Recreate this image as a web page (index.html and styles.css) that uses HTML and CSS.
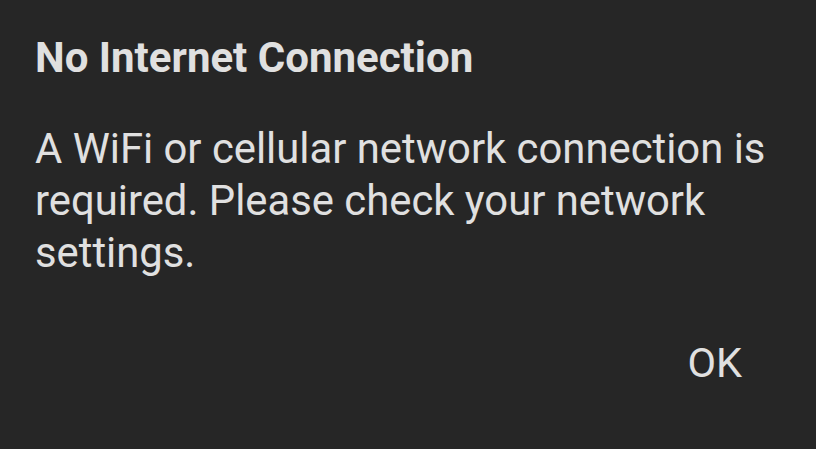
FILE: index.html
```html
<!DOCTYPE html>
<html>
<head>
<meta charset="utf-8">
<link rel="stylesheet" href="styles.css">
</head>
<body>
<div class="dialog">
  <h1 class="title">No Internet Connection</h1>
  <p class="message">A WiFi or cellular network connection is required. Please check your network settings.</p>
  <div class="actions">
    <button class="btn">OK</button>
  </div>
</div>
</body>
</html>
```
FILE: styles.css
```css
html, body {
  margin: 0;
  padding: 0;
  background: #262626;
  width: 816px;
  height: 449px;
  overflow: hidden;
}
.dialog {
  font-family: Roboto, "Noto Sans", sans-serif;
  color: #e0e0e0;
  padding: 34px 0 0 35px;
  box-sizing: border-box;
  width: 816px;
}
.title {
  margin: 0;
  font-size: 42px;
  font-weight: 700;
  line-height: 48px;
}
.message {
  margin: 41px 0 0 0;
  font-size: 41.8px;
  font-weight: 400;
  line-height: 52px;
  width: 740px;
}
.actions {
  display: flex;
  justify-content: flex-end;
  padding-right: 74px;
  margin-top: 60px;
}
.btn {
  background: none;
  border: none;
  padding: 0;
  color: #e0e0e0;
  font-family: Roboto, sans-serif;
  font-size: 41.5px;
  font-weight: 400;
  line-height: 48px;
}
```
